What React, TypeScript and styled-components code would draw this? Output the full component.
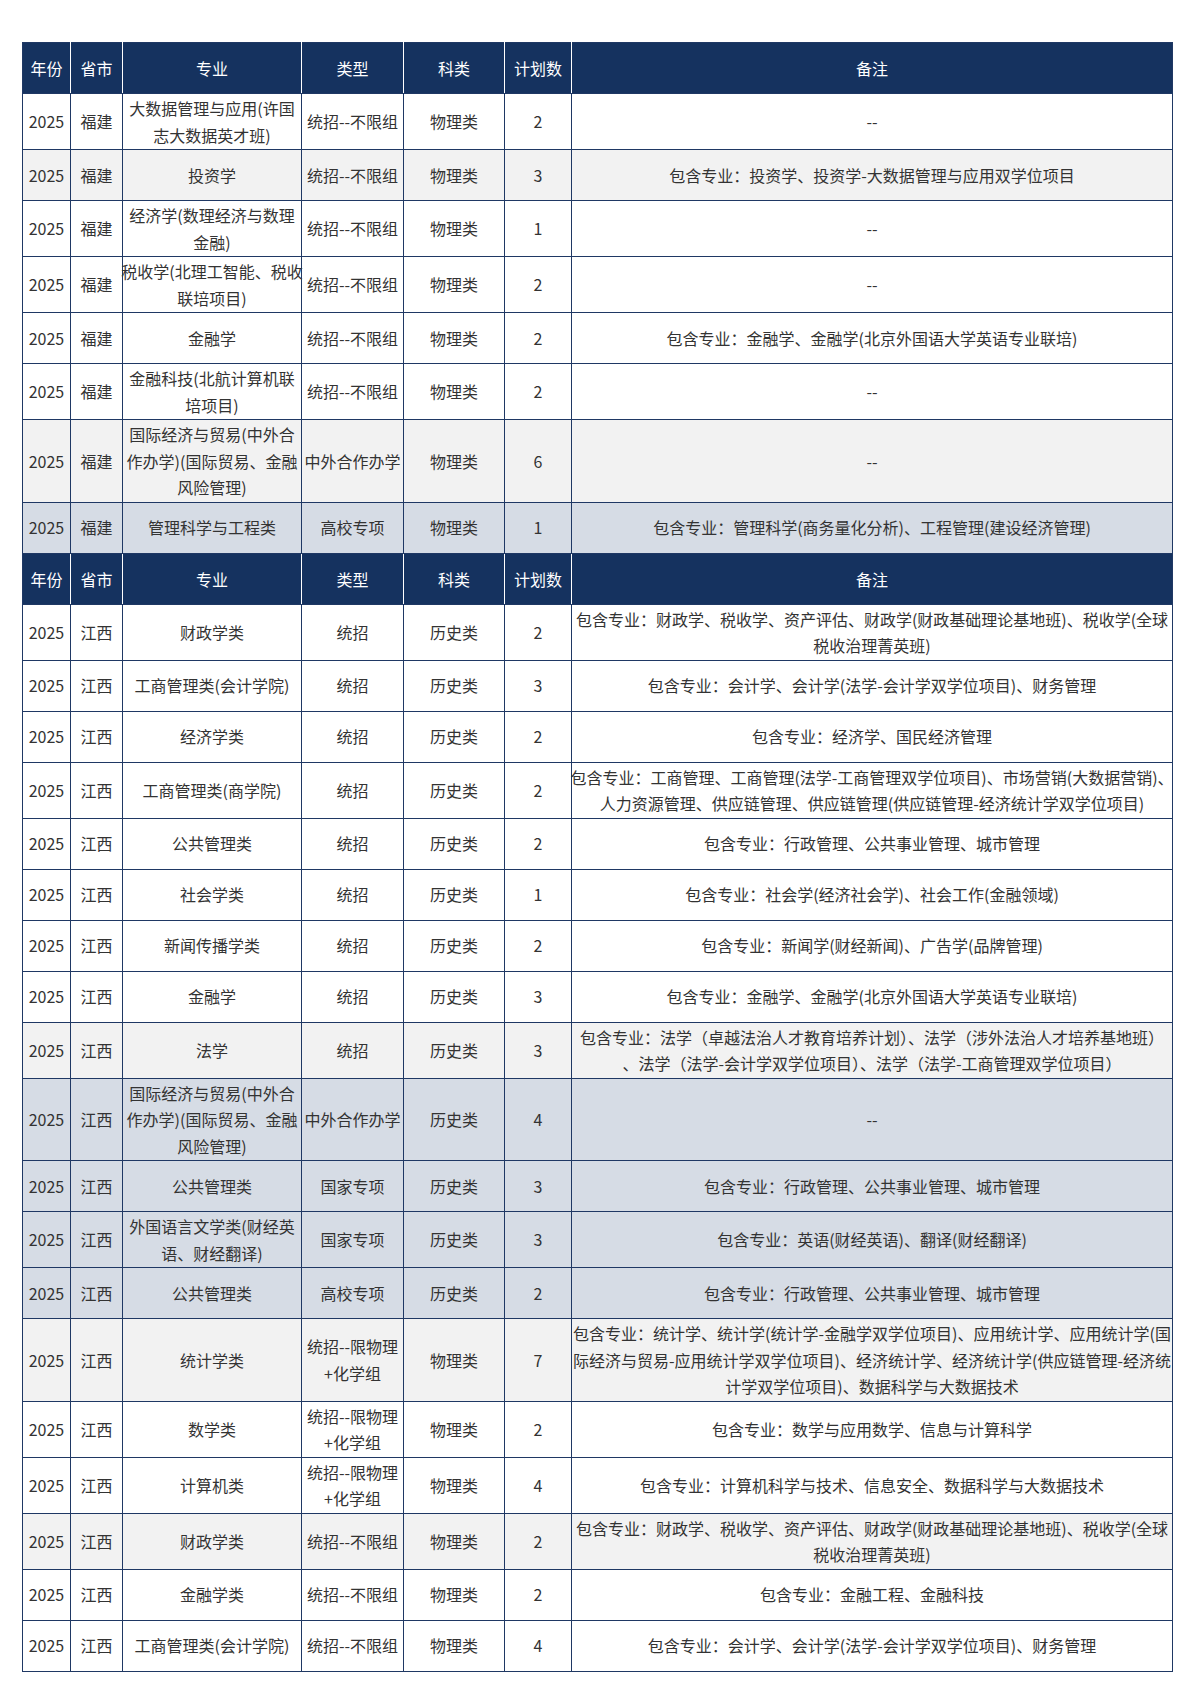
import React from 'react'
import styled, { createGlobalStyle } from 'styled-components'

type Tone = 'plain' | 'grey' | 'blue'
type Text = string | string[]

interface PlanRow {
  province: string
  major: Text
  kind: Text
  subject: string
  plan: number
  note: Text
  tone?: Tone
}

const NAVY = '#15325f'
const LINE = '#1f3864'

const columns = [
  { title: '年份', width: 48 },
  { title: '省市', width: 52 },
  { title: '专业', width: 179 },
  { title: '类型', width: 102 },
  { title: '科类', width: 101 },
  { title: '计划数', width: 67 },
  { title: '备注', width: 601 },
]

const caizheng = [
  '包含专业：财政学、税收学、资产评估、财政学(财政基础理论基地班)、税收学(全球',
  '税收治理菁英班)',
]
const guoji = ['国际经济与贸易(中外合', '作办学)(国际贸易、金融', '风险管理)']
const xianWuli = ['统招--限物理', '+化学组']
const gonggong = '包含专业：行政管理、公共事业管理、城市管理'
const kuaiji = '包含专业：会计学、会计学(法学-会计学双学位项目)、财务管理'
const jinrong = '包含专业：金融学、金融学(北京外国语大学英语专业联培)'

const fujian: PlanRow[] = [
  { province: '福建', major: ['大数据管理与应用(许国', '志大数据英才班)'], kind: '统招--不限组', subject: '物理类', plan: 2, note: '--' },
  { province: '福建', major: '投资学', kind: '统招--不限组', subject: '物理类', plan: 3, note: '包含专业：投资学、投资学-大数据管理与应用双学位项目', tone: 'grey' },
  { province: '福建', major: ['经济学(数理经济与数理', '金融)'], kind: '统招--不限组', subject: '物理类', plan: 1, note: '--' },
  { province: '福建', major: ['税收学(北理工智能、税收', '联培项目)'], kind: '统招--不限组', subject: '物理类', plan: 2, note: '--' },
  { province: '福建', major: '金融学', kind: '统招--不限组', subject: '物理类', plan: 2, note: jinrong },
  { province: '福建', major: ['金融科技(北航计算机联', '培项目)'], kind: '统招--不限组', subject: '物理类', plan: 2, note: '--' },
  { province: '福建', major: guoji, kind: '中外合作办学', subject: '物理类', plan: 6, note: '--', tone: 'grey' },
  { province: '福建', major: '管理科学与工程类', kind: '高校专项', subject: '物理类', plan: 1, note: '包含专业：管理科学(商务量化分析)、工程管理(建设经济管理)', tone: 'blue' },
]

const jiangxi: PlanRow[] = [
  { province: '江西', major: '财政学类', kind: '统招', subject: '历史类', plan: 2, note: caizheng },
  { province: '江西', major: '工商管理类(会计学院)', kind: '统招', subject: '历史类', plan: 3, note: kuaiji },
  { province: '江西', major: '经济学类', kind: '统招', subject: '历史类', plan: 2, note: '包含专业：经济学、国民经济管理' },
  {
    province: '江西', major: '工商管理类(商学院)', kind: '统招', subject: '历史类', plan: 2,
    note: [
      '包含专业：工商管理、工商管理(法学-工商管理双学位项目)、市场营销(大数据营销)、',
      '人力资源管理、供应链管理、供应链管理(供应链管理-经济统计学双学位项目)',
    ],
  },
  { province: '江西', major: '公共管理类', kind: '统招', subject: '历史类', plan: 2, note: gonggong },
  { province: '江西', major: '社会学类', kind: '统招', subject: '历史类', plan: 1, note: '包含专业：社会学(经济社会学)、社会工作(金融领域)' },
  { province: '江西', major: '新闻传播学类', kind: '统招', subject: '历史类', plan: 2, note: '包含专业：新闻学(财经新闻)、广告学(品牌管理)' },
  { province: '江西', major: '金融学', kind: '统招', subject: '历史类', plan: 3, note: jinrong },
  {
    province: '江西', major: '法学', kind: '统招', subject: '历史类', plan: 3, tone: 'grey',
    note: [
      '包含专业：法学（卓越法治人才教育培养计划）、法学（涉外法治人才培养基地班）',
      '、法学（法学-会计学双学位项目）、法学（法学-工商管理双学位项目）',
    ],
  },
  { province: '江西', major: guoji, kind: '中外合作办学', subject: '历史类', plan: 4, note: '--', tone: 'blue' },
  { province: '江西', major: '公共管理类', kind: '国家专项', subject: '历史类', plan: 3, note: gonggong, tone: 'blue' },
  { province: '江西', major: ['外国语言文学类(财经英', '语、财经翻译)'], kind: '国家专项', subject: '历史类', plan: 3, note: '包含专业：英语(财经英语)、翻译(财经翻译)', tone: 'blue' },
  { province: '江西', major: '公共管理类', kind: '高校专项', subject: '历史类', plan: 2, note: gonggong, tone: 'blue' },
  {
    province: '江西', major: '统计学类', kind: xianWuli, subject: '物理类', plan: 7, tone: 'grey',
    note: [
      '包含专业：统计学、统计学(统计学-金融学双学位项目)、应用统计学、应用统计学(国',
      '际经济与贸易-应用统计学双学位项目)、经济统计学、经济统计学(供应链管理-经济统',
      '计学双学位项目)、数据科学与大数据技术',
    ],
  },
  { province: '江西', major: '数学类', kind: xianWuli, subject: '物理类', plan: 2, note: '包含专业：数学与应用数学、信息与计算科学' },
  { province: '江西', major: '计算机类', kind: xianWuli, subject: '物理类', plan: 4, note: '包含专业：计算机科学与技术、信息安全、数据科学与大数据技术' },
  { province: '江西', major: '财政学类', kind: '统招--不限组', subject: '物理类', plan: 2, note: caizheng, tone: 'grey' },
  { province: '江西', major: '金融学类', kind: '统招--不限组', subject: '物理类', plan: 2, note: '包含专业：金融工程、金融科技' },
  { province: '江西', major: '工商管理类(会计学院)', kind: '统招--不限组', subject: '物理类', plan: 4, note: kuaiji },
]

const toneColors: Record<Tone, string> = {
  plain: '#ffffff',
  grey: '#f2f2f2',
  blue: '#d6dce5',
}

const GlobalStyle = createGlobalStyle`
  body {
    margin: 0;
    background: #ffffff;
    font-family: "Noto Sans CJK SC", "Microsoft YaHei", sans-serif;
  }
`

const Page = styled.div`
  padding: 42px 18px 14px 22px;
`

const Table = styled.table`
  width: 1150px;
  border-collapse: collapse;
  table-layout: fixed;
  font-size: 16px;
  color: #333333;
`

const Col = styled.col<{ $w: number }>`
  width: ${(p) => p.$w}px;
`

const HeadRow = styled.tr`
  height: 51px;
  background: ${NAVY};
`

const HeadCell = styled.th`
  padding: 0;
  font-weight: 400;
  color: #ffffff;
  line-height: 26px;
  text-align: center;
  border: 1px solid ${LINE};
  border-left-color: #ffffff;
  border-right-color: #ffffff;

  &:first-child {
    border-left-color: ${LINE};
  }
  &:last-child {
    border-right-color: ${LINE};
  }
`

const BodyRow = styled.tr<{ $tone: Tone }>`
  height: 51px;
  background: ${(p) => toneColors[p.$tone]};
`

const Cell = styled.td`
  padding: 1px 0;
  border: 1px solid ${LINE};
  line-height: 26.5px;
  text-align: center;
  vertical-align: middle;
`

const Lines = styled.div`
  display: flex;
  flex-direction: column;
  align-items: center;
`

const Line = styled.span`
  white-space: nowrap;
`

const CellText: React.FC<{ value: Text }> = ({ value }) => {
  const lines = Array.isArray(value) ? value : [value]
  return (
    <Lines>
      {lines.map((l, i) => (
        <Line key={i}>{l}</Line>
      ))}
    </Lines>
  )
}

const Header: React.FC = () => (
  <HeadRow>
    {columns.map((c) => (
      <HeadCell key={c.title}>{c.title}</HeadCell>
    ))}
  </HeadRow>
)

const Section: React.FC<{ rows: PlanRow[] }> = ({ rows }) => (
  <tbody>
    <Header />
    {rows.map((r, i) => (
      <BodyRow key={i} $tone={r.tone || 'plain'}>
        <Cell>2025</Cell>
        <Cell>{r.province}</Cell>
        <Cell>
          <CellText value={r.major} />
        </Cell>
        <Cell>
          <CellText value={r.kind} />
        </Cell>
        <Cell>{r.subject}</Cell>
        <Cell>{r.plan}</Cell>
        <Cell>
          <CellText value={r.note} />
        </Cell>
      </BodyRow>
    ))}
  </tbody>
)

const App: React.FC = () => {
  return (
    <>
      <GlobalStyle />
      <Page>
        <Table>
          <colgroup>
            {columns.map((c) => (
              <Col key={c.title} $w={c.width} />
            ))}
          </colgroup>
          <Section rows={fujian} />
          <Section rows={jiangxi} />
        </Table>
      </Page>
    </>
  )
}

export default App
